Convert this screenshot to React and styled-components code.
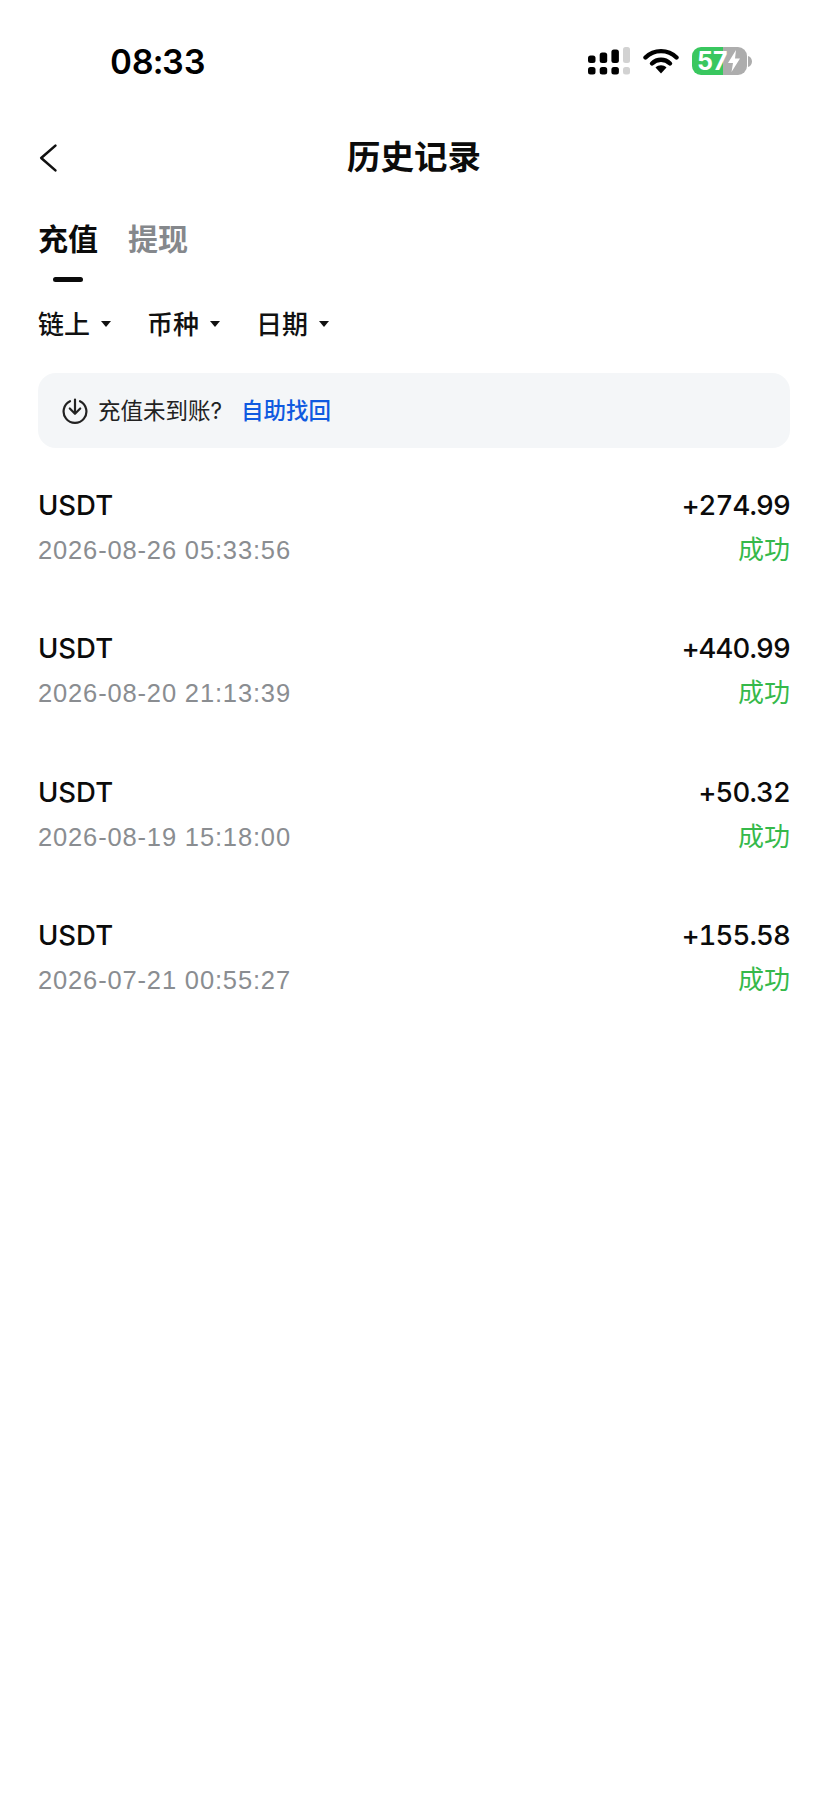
import React from "react";
import styled, { createGlobalStyle } from "styled-components";

const Global = createGlobalStyle`
  html, body { margin: 0; padding: 0; background: #fff; }
  body { font-family: Inter, "Noto Sans CJK SC", sans-serif; }
`;
const Page = styled.div`
  width: 828px; height: 1800px; background: #fff; overflow: hidden;
  display: flex; flex-direction: column;
`;
const StatusBar = styled.div`
  height: 122px; display: flex; align-items: center; justify-content: space-between;
  padding: 0 76px 0 110px; box-sizing: border-box;
`;
const Time = styled.div`
  font-size: 34px; font-weight: 600; color: #000; line-height: 1; letter-spacing: -0.3px; margin-top: 2px;
  font-variant-numeric: tabular-nums;
`;
const StatusIcons = styled.div`
  display: flex; align-items: center; gap: 13px;
`;
const Battery = styled.div`
  position: relative; width: 55px; height: 28px; border-radius: 9px; overflow: hidden;
  background: linear-gradient(90deg, #39c75f 0 57%, #adadad 57% 100%);
  color: #fff; font-size: 25px; font-weight: 700; line-height: 28px; padding-left: 5px; box-sizing: border-box;
`;
const BatteryWrap = styled.div`display: flex; align-items: center; gap: 1px;`;
const Header = styled.div`
  height: 72px; display: flex; align-items: center; justify-content: center; position: relative;
`;
const Back = styled.svg`position: absolute; left: 38px; top: 21px;`;
const Title = styled.div`font-size: 33.5px; font-weight: 700; color: #0b0b0b; line-height: 1;`;
const Tabs = styled.div`
  display: flex; gap: 30px; padding: 13px 38px 0;
`;
const Tab = styled.div`
  position: relative; height: 76px; font-size: 30px; line-height: 64px; font-weight: 700;
  color: ${p => (p.$active ? "#0b0b0b" : "#85888c")};
`;
const Indicator = styled.div`
  position: absolute; left: 15px; bottom: 1px; width: 30px; height: 5px; border-radius: 3px; background: #0b0b0b;
`;
const Filters = styled.div`
  display: flex; gap: 36px; padding: 0 38px; height: 50px; align-items: center; margin-top: 14px;
`;
const Filter = styled.div`
  display: flex; align-items: center; gap: 11px; font-size: 26px; font-weight: 500; color: #111;
`;
const Caret = styled.span`
  width: 0; height: 0; border-left: 5.5px solid transparent; border-right: 5.5px solid transparent;
  border-top: 6.5px solid #111; margin-top: 3px;
`;
const Banner = styled.div`
  margin: 26px 38px 0; height: 75px; border-radius: 18px; background: #f4f6f8;
  display: flex; align-items: center; padding-left: 24px; font-size: 22.5px; color: #222;
`;
const Help = styled.span`margin-left: 19px; padding-bottom: 3px; color: #0f5ae0; font-weight: 500;`;
const BannerText = styled.span`margin-left: 10px; padding-bottom: 3px;`;
const List = styled.div`display: flex; flex-direction: column; padding: 40px 38px 0;`;
const Row = styled.div`
  height: 143.3px; display: flex; justify-content: space-between;
`;
const Col = styled.div`
  display: flex; flex-direction: column; gap: 11px; align-items: ${p => (p.$right ? "flex-end" : "flex-start")};
`;
const Primary = styled.div`
  font-size: 27.5px; line-height: 34px; font-weight: 500; color: #0b0b0b;
`;
const Amount = styled(Primary)`
  font-variant-numeric: tabular-nums; letter-spacing: -0.85px;
`;
const Secondary = styled.div`
  font-family: "Liberation Sans", sans-serif; font-size: 25.5px; line-height: 34px; letter-spacing: 0.85px; color: #8a8d91;
`;
const Success = styled.div`font-size: 26px; line-height: 34px; color: #35b94a;`;

const rows = [
  ["2026-08-26 05:33:56", "+274.99"],
  ["2026-08-20 21:13:39", "+440.99"],
  ["2026-08-19 15:18:00", "+50.32"],
  ["2026-07-21 00:55:27", "+155.58"],
];

export default function App() {
  return (
    <Page>
      <Global />
      <StatusBar>
        <Time>08:33</Time>
        <StatusIcons>
          <svg width="42" height="28" viewBox="0 0 42 28">
            <g fill="#000">
              <rect x="0" y="8.5" width="7.5" height="7.5" rx="2.5" />
              <rect x="11.7" y="5.5" width="7.5" height="10.5" rx="2.5" />
              <rect x="23.4" y="2.5" width="7.5" height="13.5" rx="2.5" />
              <rect x="0" y="20" width="7.5" height="7.5" rx="2.5" />
              <rect x="11.7" y="20" width="7.5" height="7.5" rx="2.5" />
              <rect x="23.4" y="20" width="7.5" height="7.5" rx="2.5" />
            </g>
            <rect x="35" y="0" width="7" height="16" rx="2.5" fill="#d2d2d2" />
            <rect x="35" y="20" width="7" height="7.5" rx="2.5" fill="#d2d2d2" />
          </svg>
          <svg width="36" height="28" viewBox="0 0 36 28">
            <path d="M2.5 10.5 C11 2 25 2 33.5 10.5" fill="none" stroke="#000" strokeWidth="4.4" strokeLinecap="round" />
            <path d="M9 16.5 C14 11.5 22 11.5 27 16.5" fill="none" stroke="#000" strokeWidth="4.4" strokeLinecap="round" />
            <path d="M12.5 20.5 C15.5 17.6 20.5 17.6 23.5 20.5 L18 26.5 Z" fill="#000" />
          </svg>
          <BatteryWrap>
            <Battery>
              57
              <svg width="16" height="24" viewBox="0 0 16 24" style={{ position: "absolute", right: 5, top: 2 }}>
                <path d="M10 1 L2 14 H7 L5.5 23 L14 9.5 H9 Z" fill="#fff" />
              </svg>
            </Battery>
            <svg width="4" height="11" viewBox="0 0 4 11">
              <path d="M0 0 C2.5 .5 4 3 4 5.5 C4 8 2.5 10.5 0 11 Z" fill="#adadad" />
            </svg>
          </BatteryWrap>
        </StatusIcons>
      </StatusBar>
      <Header>
        <Back width="22" height="30" viewBox="0 0 24 32">
          <path d="M19 2.5 L3.5 16 L19 29.5" fill="none" stroke="#111" strokeWidth="2.8" strokeLinecap="round" strokeLinejoin="round" />
        </Back>
        <Title>历史记录</Title>
      </Header>
      <Tabs>
        <Tab $active>充值<Indicator /></Tab>
        <Tab>提现</Tab>
      </Tabs>
      <Filters>
        <Filter>链上<Caret /></Filter>
        <Filter>币种<Caret /></Filter>
        <Filter>日期<Caret /></Filter>
      </Filters>
      <Banner>
        <svg width="26" height="26" viewBox="0 0 26 26">
          <path d="M8 3.2 A11.4 11.4 0 1 0 18 3.2" fill="none" stroke="#222" strokeWidth="2.2" strokeLinecap="round" />
          <path d="M13 1.5 V15.5 M7.8 10.5 L13 15.8 L18.2 10.5" fill="none" stroke="#222" strokeWidth="2.2" strokeLinecap="round" strokeLinejoin="round" />
        </svg>
        <BannerText>充值未到账?</BannerText>
        <Help>自助找回</Help>
      </Banner>
      <List>
        {rows.map(([date, amount]) => (
          <Row key={date}>
            <Col>
              <Primary>USDT</Primary>
              <Secondary>{date}</Secondary>
            </Col>
            <Col $right>
              <Amount>{amount}</Amount>
              <Success>成功</Success>
            </Col>
          </Row>
        ))}
      </List>
    </Page>
  );
}
